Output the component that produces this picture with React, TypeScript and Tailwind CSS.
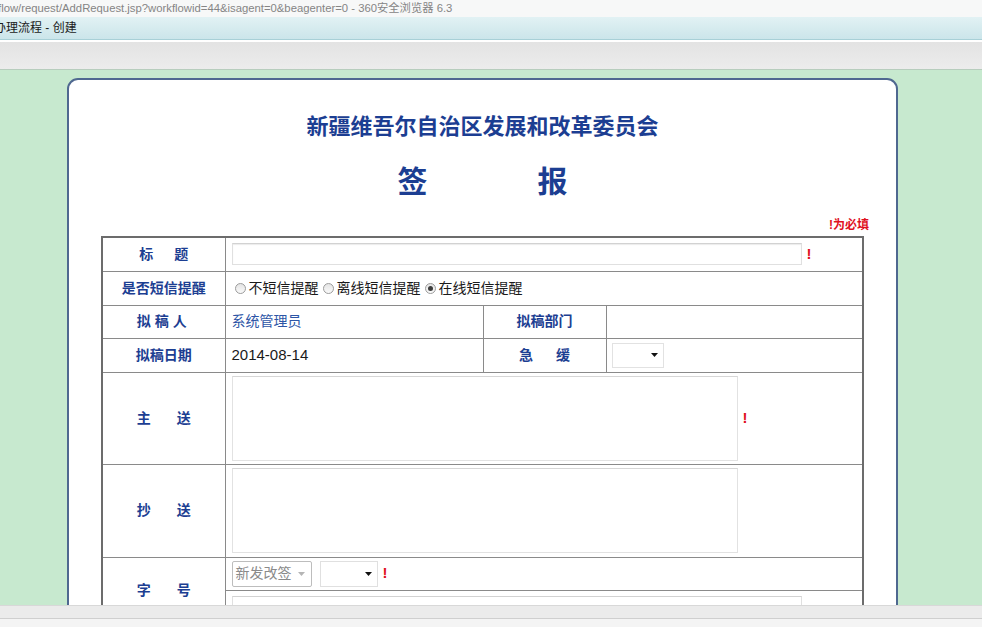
import React from 'react';

const CJK = "font-['Liberation_Sans','Noto_Sans_CJK_SC',sans-serif]";

function Arrow({ light }: { light?: boolean }) {
  return (
    <svg width="7" height="4" viewBox="0 0 7 4" className="shrink-0">
      <path d="M0 0h7L3.5 4z" fill={light ? '#b5b5b5' : '#111'} />
    </svg>
  );
}

function Radio({ checked }: { checked?: boolean }) {
  return (
    <span className="mr-[3px] inline-flex h-[11px] w-[11px] items-center justify-center rounded-full border border-[#9c9c9c] bg-gradient-to-b from-[#e4e4e4] to-[#fafafa]">
      {checked && <span className="h-[5px] w-[5px] rounded-full bg-[#3c3c3c]" />}
    </span>
  );
}

function Label({ children }: { children: React.ReactNode }) {
  return (
    <td className="border border-[#8a8a8a] text-center align-middle text-[14px] font-bold text-[#1c3e92]">
      {children}
    </td>
  );
}

function Spread({ a, b, gap }: { a: string; b: string; gap: string }) {
  return (
    <span className={`inline-flex ${gap}`}>
      <span>{a}</span>
      <span>{b}</span>
    </span>
  );
}

const Bang = ({ className = '' }: { className?: string }) => (
  <span className={`text-[15px] font-bold text-[#e0101e] ${className}`}>!</span>
);

export default function App() {
  return (
    <div className={`flex h-[627px] w-[982px] flex-col overflow-hidden bg-white ${CJK}`}>
      {/* window title */}
      <div className="flex h-[17px] items-center overflow-hidden whitespace-nowrap bg-[#f7f8f8] text-[11.3px] text-[#858585]">
        <span className="ml-[-2px]">flow/request/AddRequest.jsp?workflowid=44&amp;isagent=0&amp;beagenter=0 - 360安全浏览器 6.3</span>
      </div>
      {/* tab bar */}
      <div className="flex h-[23px] items-center overflow-hidden whitespace-nowrap border-b border-[#a8d0d7] bg-gradient-to-b from-[#e2f2f4] to-[#cbe5ea] text-[12px] text-[#1a1a1a]">
        <span className="ml-[-6px]">办理流程 - 创建</span>
      </div>
      <div className="h-[2px] bg-white" />
      {/* toolbar */}
      <div className="h-[28px] border-b border-[#b7cdbd] bg-gradient-to-b from-[#e3e3e3] to-[#ececec]" />
      {/* content */}
      <div className="min-h-0 flex-1 overflow-hidden bg-[#c7e9cf]">
        <div className="ml-[67px] mt-[8px] h-[700px] w-[831px] rounded-t-[11px] border-2 border-[#4f6890] bg-white">
          <div className="pt-[32px] text-center text-[22px] font-bold leading-[30px] text-[#1c3e92]">
            新疆维吾尔自治区发展和改革委员会
          </div>
          <div className="mt-[20px] flex justify-center gap-[110px] text-[30px] font-bold leading-[40px] text-[#1c3e92]">
            <span>签</span>
            <span>报</span>
          </div>
          <div className="mr-[27px] mt-[15px] text-right text-[12px] font-bold leading-[16px] text-[#e0101e]">!为必填</div>
          <table className="ml-[32px] mt-[3px] w-[761px] table-fixed border-collapse border-2 border-[#6c6c6c] text-[14px] text-[#1a1a1a]">
            <colgroup>
              <col className="w-[123px]" />
              <col className="w-[258px]" />
              <col className="w-[123px]" />
              <col className="w-[257px]" />
            </colgroup>
            <tbody>
              <tr className="h-[34px]">
                <Label>
                  <Spread a="标" b="题" gap="gap-[21px]" />
                </Label>
                <td colSpan={3} className="border border-[#8a8a8a] px-[6px]">
                  <div className="flex items-center">
                    <div className="h-[22px] w-[570px] border border-[#e0e0e0] border-t-[#d2d2d2] bg-white shadow-[inset_0_1px_1px_#ececec]" />
                    <Bang className="ml-[5px]" />
                  </div>
                </td>
              </tr>
              <tr className="h-[34px]">
                <Label>是否短信提醒</Label>
                <td colSpan={3} className="border border-[#8a8a8a] px-[9px]">
                  <div className="flex items-center whitespace-nowrap">
                    <Radio />
                    <span>不短信提醒</span>
                    <span className="w-[4px]" />
                    <Radio />
                    <span>离线短信提醒</span>
                    <span className="w-[4px]" />
                    <Radio checked />
                    <span>在线短信提醒</span>
                  </div>
                </td>
              </tr>
              <tr className="h-[33px]">
                <Label>
                  <span className="tracking-[4px]">拟稿人</span>
                </Label>
                <td className="border border-[#8a8a8a] px-[6px] text-[#2d55a6]">系统管理员</td>
                <Label>拟稿部门</Label>
                <td className="border border-[#8a8a8a]" />
              </tr>
              <tr className="h-[34px]">
                <Label>拟稿日期</Label>
                <td className="border border-[#8a8a8a] px-[6px] text-[15px]">2014-08-14</td>
                <Label>
                  <Spread a="急" b="缓" gap="gap-[23px]" />
                </Label>
                <td className="border border-[#8a8a8a] px-[5px]">
                  <div className="flex h-[25px] w-[52px] items-center justify-end border border-[#e2e2e2] pr-[5px]">
                    <Arrow />
                  </div>
                </td>
              </tr>
              <tr className="h-[92px]">
                <Label>
                  <Spread a="主" b="送" gap="gap-[26px]" />
                </Label>
                <td colSpan={3} className="border border-[#8a8a8a] px-[6px]">
                  <div className="flex items-center">
                    <div className="h-[85px] w-[506px] border border-[#e2e2e2] border-t-[#d6d6d6] bg-white" />
                    <Bang className="ml-[5px]" />
                  </div>
                </td>
              </tr>
              <tr className="h-[93px]">
                <Label>
                  <Spread a="抄" b="送" gap="gap-[26px]" />
                </Label>
                <td colSpan={3} className="border border-[#8a8a8a] px-[6px]">
                  <div className="h-[85px] w-[506px] border border-[#e2e2e2] border-t-[#d6d6d6] bg-white" />
                </td>
              </tr>
              <tr className="h-[33px]">
                <td rowSpan={2} className="border border-[#8a8a8a] text-center align-middle text-[14px] font-bold text-[#1c3e92]">
                  <Spread a="字" b="号" gap="gap-[26px]" />
                </td>
                <td colSpan={3} className="border border-[#8a8a8a] px-[6px]">
                  <div className="flex items-center">
                    <div className="flex h-[26px] w-[80px] items-center justify-between rounded-[2px] border border-[#bdbdbd] pl-[3px] pr-[6px] text-[#8a8a8a]">
                      <span>新发改签</span>
                      <Arrow light />
                    </div>
                    <div className="ml-[8px] flex h-[26px] w-[58px] items-center justify-end border border-[#e0e0e0] pr-[5px]">
                      <Arrow />
                    </div>
                    <Bang className="ml-[5px]" />
                  </div>
                </td>
              </tr>
              <tr className="h-[34px]">
                <td colSpan={3} className="border border-[#8a8a8a] px-[6px]">
                  <div className="h-[22px] w-[570px] border border-[#e0e0e0] border-t-[#d2d2d2]" />
                </td>
              </tr>
              <tr className="h-[34px]">
                <Label>
                  <Spread a="内" b="容" gap="gap-[26px]" />
                </Label>
                <td colSpan={3} className="border border-[#8a8a8a]" />
              </tr>
            </tbody>
          </table>
        </div>
      </div>
      {/* status bar */}
      <div className="flex h-[22px] flex-col">
        <div className="h-[13px] border-t border-[#d8d8d8] bg-[#ebebeb]" />
        <div className="h-[9px] border-t border-[#cfcfcf] bg-[#f4f4f4]" />
      </div>
    </div>
  );
}
